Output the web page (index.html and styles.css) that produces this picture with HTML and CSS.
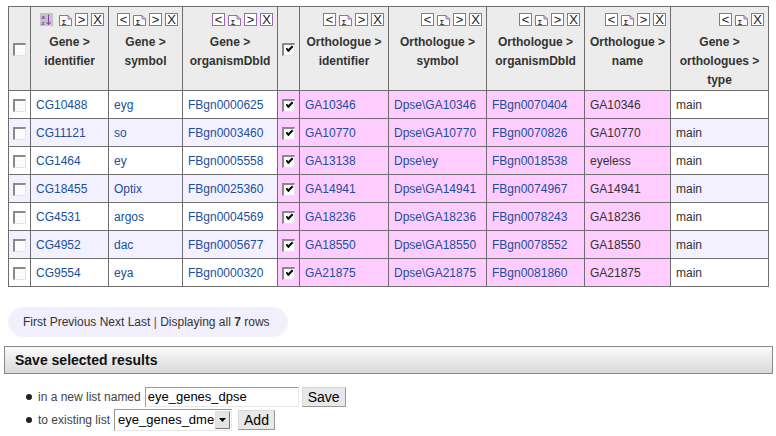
FILE: index.html
```html
<!DOCTYPE html>
<html>
<head>
<meta charset="utf-8">
<link rel="stylesheet" href="styles.css">
</head>
<body>
<table class="results">
  <colgroup>
    <col class="w-chk"><col class="w-gid"><col class="w-gsym"><col class="w-gorg"><col class="w-chk">
    <col class="w-oid"><col class="w-osym"><col class="w-oorg"><col class="w-oname"><col class="w-type">
  </colgroup>
  <thead>
    <tr>
      <th class="chkcell dotted"><span class="cb"></span></th>
      <th><div class="tools"><span class="ic sort"><svg width="13" height="13" viewBox="0 0 13 13"><text x="1.5" y="6" font-size="6" font-family="Liberation Sans" fill="#8040a0">a</text><text x="1.5" y="12" font-size="6" font-family="Liberation Sans" fill="#8040a0">z</text><path d="M8.5 1.5 V11.5 M6.2 9 L8.5 11.5 L10.8 9" stroke="#8040a0" stroke-width="1" fill="none"/></svg></span><span class="ic sig"><svg width="13" height="13" viewBox="0 0 13 13"><path d="M0.5 2.5 H9 L12.5 6 V12.5 H0.5 Z M9 2.5 V6 H12.5" stroke="#9a6ab0" fill="#fff"/><text x="3" y="11.5" font-size="7" font-family="Liberation Sans" fill="#222">Σ</text></svg></span><span class="ic box">&gt;</span><span class="ic box">X</span></div><div class="lbl">Gene &gt;<br>identifier</div></th>
      <th><div class="tools"><span class="ic box">&lt;</span><span class="ic sig"><svg width="13" height="13" viewBox="0 0 13 13"><path d="M0.5 2.5 H9 L12.5 6 V12.5 H0.5 Z M9 2.5 V6 H12.5" stroke="#9a6ab0" fill="#fff"/><text x="3" y="11.5" font-size="7" font-family="Liberation Sans" fill="#222">Σ</text></svg></span><span class="ic box">&gt;</span><span class="ic box">X</span></div><div class="lbl">Gene &gt;<br>symbol</div></th>
      <th><div class="tools"><span class="ic box">&lt;</span><span class="ic sig"><svg width="13" height="13" viewBox="0 0 13 13"><path d="M0.5 2.5 H9 L12.5 6 V12.5 H0.5 Z M9 2.5 V6 H12.5" stroke="#9a6ab0" fill="#fff"/><text x="3" y="11.5" font-size="7" font-family="Liberation Sans" fill="#222">Σ</text></svg></span><span class="ic box">&gt;</span><span class="ic box">X</span></div><div class="lbl">Gene &gt;<br>organismDbId</div></th>
      <th class="chkcell dotted"><span class="cb on"></span></th>
      <th><div class="tools"><span class="ic box">&lt;</span><span class="ic sig"><svg width="13" height="13" viewBox="0 0 13 13"><path d="M0.5 2.5 H9 L12.5 6 V12.5 H0.5 Z M9 2.5 V6 H12.5" stroke="#9a6ab0" fill="#fff"/><text x="3" y="11.5" font-size="7" font-family="Liberation Sans" fill="#222">Σ</text></svg></span><span class="ic box">&gt;</span><span class="ic box">X</span></div><div class="lbl">Orthologue &gt;<br>identifier</div></th>
      <th><div class="tools"><span class="ic box">&lt;</span><span class="ic sig"><svg width="13" height="13" viewBox="0 0 13 13"><path d="M0.5 2.5 H9 L12.5 6 V12.5 H0.5 Z M9 2.5 V6 H12.5" stroke="#9a6ab0" fill="#fff"/><text x="3" y="11.5" font-size="7" font-family="Liberation Sans" fill="#222">Σ</text></svg></span><span class="ic box">&gt;</span><span class="ic box">X</span></div><div class="lbl">Orthologue &gt;<br>symbol</div></th>
      <th><div class="tools"><span class="ic box">&lt;</span><span class="ic sig"><svg width="13" height="13" viewBox="0 0 13 13"><path d="M0.5 2.5 H9 L12.5 6 V12.5 H0.5 Z M9 2.5 V6 H12.5" stroke="#9a6ab0" fill="#fff"/><text x="3" y="11.5" font-size="7" font-family="Liberation Sans" fill="#222">Σ</text></svg></span><span class="ic box">&gt;</span><span class="ic box">X</span></div><div class="lbl">Orthologue &gt;<br>organismDbId</div></th>
      <th><div class="tools"><span class="ic box">&lt;</span><span class="ic sig"><svg width="13" height="13" viewBox="0 0 13 13"><path d="M0.5 2.5 H9 L12.5 6 V12.5 H0.5 Z M9 2.5 V6 H12.5" stroke="#9a6ab0" fill="#fff"/><text x="3" y="11.5" font-size="7" font-family="Liberation Sans" fill="#222">Σ</text></svg></span><span class="ic box">&gt;</span><span class="ic box">X</span></div><div class="lbl">Orthologue &gt;<br>name</div></th>
      <th><div class="tools"><span class="ic box">&lt;</span><span class="ic sig"><svg width="13" height="13" viewBox="0 0 13 13"><path d="M0.5 2.5 H9 L12.5 6 V12.5 H0.5 Z M9 2.5 V6 H12.5" stroke="#9a6ab0" fill="#fff"/><text x="3" y="11.5" font-size="7" font-family="Liberation Sans" fill="#222">Σ</text></svg></span><span class="ic box">X</span></div><div class="lbl">Gene &gt;<br>orthologues &gt;<br>type</div></th>
    </tr>
  </thead>
  <tbody>
    <tr><td class="chkcell dotted"><span class="cb"></span></td><td><a>CG10488</a></td><td><a>eyg</a></td><td><a>FBgn0000625</a></td><td class="chkcell pink"><span class="cb on"></span></td><td class="pink"><a>GA10346</a></td><td class="pink"><a>Dpse\GA10346</a></td><td class="pink"><a>FBgn0070404</a></td><td class="pink">GA10346</td><td>main</td></tr>
    <tr class="alt"><td class="chkcell dotted"><span class="cb"></span></td><td><a>CG11121</a></td><td><a>so</a></td><td><a>FBgn0003460</a></td><td class="chkcell pink"><span class="cb on"></span></td><td class="pink"><a>GA10770</a></td><td class="pink"><a>Dpse\GA10770</a></td><td class="pink"><a>FBgn0070826</a></td><td class="pink">GA10770</td><td>main</td></tr>
    <tr><td class="chkcell dotted"><span class="cb"></span></td><td><a>CG1464</a></td><td><a>ey</a></td><td><a>FBgn0005558</a></td><td class="chkcell pink"><span class="cb on"></span></td><td class="pink"><a>GA13138</a></td><td class="pink"><a>Dpse\ey</a></td><td class="pink"><a>FBgn0018538</a></td><td class="pink">eyeless</td><td>main</td></tr>
    <tr class="alt"><td class="chkcell dotted"><span class="cb"></span></td><td><a>CG18455</a></td><td><a>Optix</a></td><td><a>FBgn0025360</a></td><td class="chkcell pink"><span class="cb on"></span></td><td class="pink"><a>GA14941</a></td><td class="pink"><a>Dpse\GA14941</a></td><td class="pink"><a>FBgn0074967</a></td><td class="pink">GA14941</td><td>main</td></tr>
    <tr><td class="chkcell dotted"><span class="cb"></span></td><td><a>CG4531</a></td><td><a>argos</a></td><td><a>FBgn0004569</a></td><td class="chkcell pink"><span class="cb on"></span></td><td class="pink"><a>GA18236</a></td><td class="pink"><a>Dpse\GA18236</a></td><td class="pink"><a>FBgn0078243</a></td><td class="pink">GA18236</td><td>main</td></tr>
    <tr class="alt"><td class="chkcell dotted"><span class="cb"></span></td><td><a>CG4952</a></td><td><a>dac</a></td><td><a>FBgn0005677</a></td><td class="chkcell pink"><span class="cb on"></span></td><td class="pink"><a>GA18550</a></td><td class="pink"><a>Dpse\GA18550</a></td><td class="pink"><a>FBgn0078552</a></td><td class="pink">GA18550</td><td>main</td></tr>
    <tr><td class="chkcell dotted"><span class="cb"></span></td><td><a>CG9554</a></td><td><a>eya</a></td><td><a>FBgn0000320</a></td><td class="chkcell pink"><span class="cb on"></span></td><td class="pink"><a>GA21875</a></td><td class="pink"><a>Dpse\GA21875</a></td><td class="pink"><a>FBgn0081860</a></td><td class="pink">GA21875</td><td>main</td></tr>
  </tbody>
</table>

<div class="pager">First Previous Next Last <span class="sep">|</span> Displaying all <b>7</b> rows</div>

<div class="savebox"><h2>Save selected results</h2></div>
<ul class="savelist">
  <li><span class="hint">in a new list named</span><span class="field">eye_genes_dpse</span><span class="btn">Save</span></li>
  <li><span class="hint">to existing list</span><span class="select"><span class="selval">eye_genes_dme</span><span class="arrow"><svg width="7" height="4" viewBox="0 0 7 4"><path d="M0 0 H7 L3.5 4 Z" fill="#000"/></svg></span></span><span class="btn add">Add</span></li>
</ul>
</body>
</html>
```
FILE: styles.css
```css
html, body { margin: 0; padding: 0; background: #fff; }
body { font-family: "Liberation Sans", Arial, sans-serif; font-size: 12px; color: #333; }

.results {
  margin: 6px 0 0 8px;
  border-collapse: collapse;
  table-layout: fixed;
  width: 761px;
  border: 1px solid #6e6e6e;
}
.w-chk { width: 22px; }
.w-gid { width: 78px; }
.w-gsym { width: 74px; }
.w-gorg { width: 95px; }
.w-oid { width: 89px; }
.w-osym { width: 98px; }
.w-oorg { width: 98px; }
.w-oname { width: 86px; }
.w-type { width: 98px; }

.results th, .results td { border: 1px solid #6e6e6e; padding: 0; }
.results th {
  background: #ececec;
  vertical-align: top;
  padding: 4px 4px 0 4px;
  font-weight: bold;
  font-size: 12px;
  color: #333;
}
.results th.chkcell { vertical-align: middle; padding: 0; text-align: center; }
.results td { height: 27px; padding: 0 5px; vertical-align: middle; white-space: nowrap; }
.results td.chkcell { padding: 0; text-align: center; }
.results .dotted { border-right: 1px dotted #555; }
.results tr.alt td { background: #f3f0ff; }
.results td.pink, .results tr.alt td.pink { background: #ffccff; }
.results a { color: #1a4f9c; text-decoration: none; }

.tools { display: flex; justify-content: flex-end; align-items: center; gap: 3px; height: 14px; margin: 1px 0 7px; }
.ic { display: inline-flex; align-items: center; justify-content: center; box-sizing: border-box; }
.ic.box { width: 13px; height: 13px; border: 1px solid #9a6ab0; background: #fff; font: normal 13px/1 "Liberation Sans", Arial, sans-serif; color: #222; }
.ic.sort { width: 13px; height: 13px; background: #c4c4c4; margin-right: 3px; }
.ic.sig { width: 13px; height: 13px; }
.lbl { text-align: center; line-height: 19px; }

.cb {
  display: inline-block; width: 13px; height: 13px; box-sizing: border-box;
  border-top: 2px solid #8a8a8a; border-left: 2px solid #8a8a8a;
  border-right: 1px solid #e4e4e4; border-bottom: 1px solid #e4e4e4;
  background: #fbfbfb; vertical-align: middle; position: relative;
}
.cb.on::after {
  content: ""; position: absolute; left: 2px; top: 1px; width: 5px; height: 2px;
  border-left: 2px solid #000; border-bottom: 2px solid #000; transform: rotate(-45deg);
}

.pager {
  margin: 20px 0 0 8px; width: 280px; height: 30px; box-sizing: border-box;
  background: #f2f0fc; border-radius: 15px; padding-left: 15px;
  line-height: 30px; font-size: 12px; color: #333;
}
.pager .sep { color: #a03030; }
.pager b { color: #333; }

.savebox {
  margin: 9px 3px 0 4px; height: 28px; box-sizing: border-box;
  border: 1px solid #888; background: linear-gradient(#fbfbfb, #d9d9d9);
  padding-left: 10px;
}
.savebox h2 { margin: 0; font-size: 14px; line-height: 27px; color: #111; }

.savelist { margin: 11px 0 0 0; padding: 0 0 0 38px; list-style: none; }
.savelist li { position: relative; display: flex; align-items: center; height: 23px; font-size: 12px; }
.savelist li::before {
  content: ""; position: absolute; left: -12px; top: 9px; width: 6px; height: 6px; border-radius: 50%; background: #222;
}
.hint { color: #444; margin-right: 4px; }
.field {
  width: 154px; height: 20px; box-sizing: border-box; border: 1px solid #999; border-right-color: #e8e8e8; border-bottom-color: #e8e8e8;
  background: #fff; font-size: 13px; color: #000; padding-left: 2px; line-height: 18px;
}
.btn {
  margin-left: 3px; height: 20px; box-sizing: border-box; padding: 0 5px; border: 1px solid #d8d8d8; border-right-color: #999; border-bottom-color: #999;
  background: #e8e8e8; font-size: 14px; color: #000; line-height: 18px;
}
.select {
  display: inline-flex; align-items: center; width: 118px; height: 22px; box-sizing: border-box;
  border: 1px solid #999; border-right-color: #e8e8e8; border-bottom-color: #e8e8e8; background: #fff;
}
.selval { flex: 1; font-size: 13px; color: #000; padding-left: 3px; line-height: 20px; }
.arrow {
  width: 15px; height: 18px; box-sizing: border-box; background: #e4e4e4; border: 1px solid #ddd; border-right-color: #777; border-bottom-color: #777;
  display: inline-flex; align-items: center; justify-content: center; margin-right: 1px;
}
.btn.add { margin-left: 6px; }
```
